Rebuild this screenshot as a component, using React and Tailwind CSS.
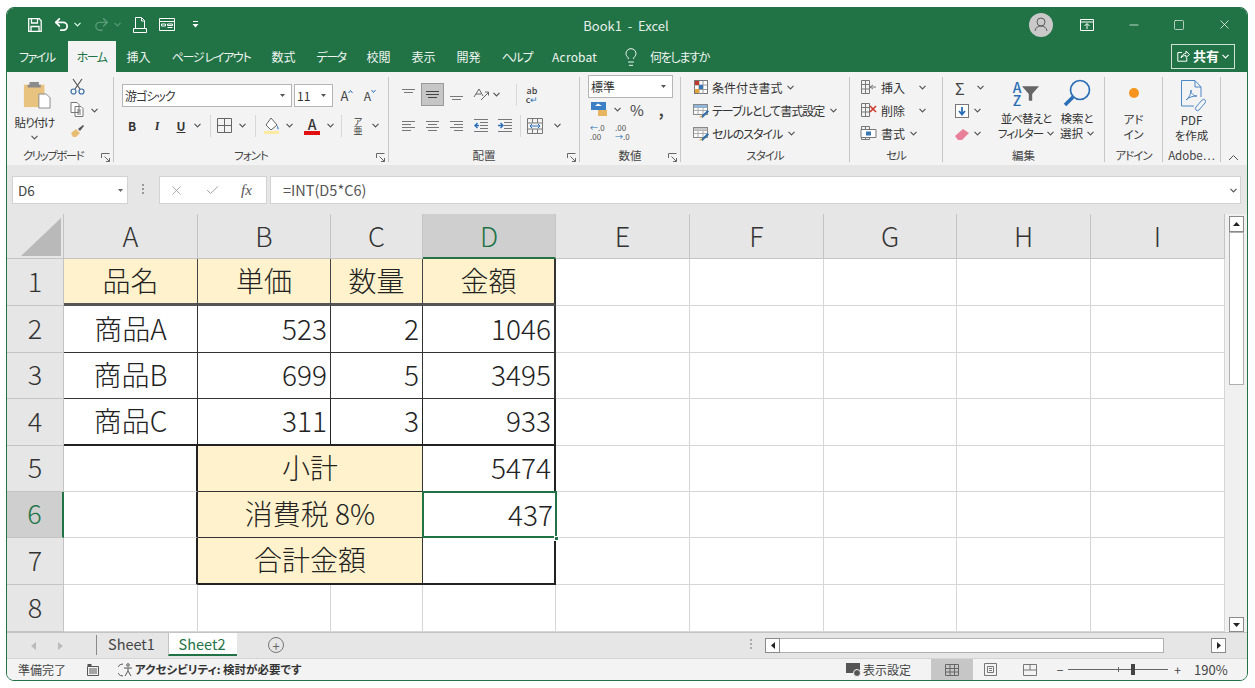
import { Lightbulb, Minus, Square, X, Undo2, Redo2, Check } from "lucide-react";

const Chev = ({ className = "", color = "#555" }) => (
  <svg width="7" height="5" viewBox="0 0 7 5" className={`shrink-0 ${className}`} fill="none" stroke={color} strokeWidth="1.2">
    <path d="M0.5 0.8 3.5 3.8 6.5 0.8" />
  </svg>
);

const Slot = ({ className = "", children }) => (
  <div className={`flex shrink-0 items-center justify-center ${className}`}>{children}</div>
);

const VSep = ({ className = "" }) => <div className={`h-[22px] w-px shrink-0 bg-[#d8d8d8] ${className}`} />;

const Kana = ({ children }) => <span className="tracking-[-1px] whitespace-nowrap">{children}</span>;

// ribbon group with the label on the bottom line
const Group = ({ className = "", label, launcher, children }) => (
  <div className={`relative flex h-[85px] shrink-0 flex-col border-r border-[#c6c6c6] ${className}`}>
    <div className="h-[72px]">{children}</div>
    <div className="h-[13px] text-center text-[11.5px] leading-[13px] text-[#444]">{label}</div>
    {launcher && (
      <svg width="9" height="9" viewBox="0 0 9 9" className="absolute right-[3px] bottom-0" fill="none" stroke="#666">
        <path d="M.5 5V.5H8.5M8.5 8.5 3.5 3.500M8.5 5V8.5H5" />
      </svg>
    )}
  </div>
);

const Combo = ({ className = "", children }) => (
  <div className={`flex h-[23px] shrink-0 items-center justify-between border border-[#b5b5b5] bg-white pr-[6px] pl-[2px] text-[12px] text-[#333] ${className}`}>
    <span>{children}</span>
    <svg width="5" height="3" viewBox="0 0 5 3"><path d="M0 0h5L2.500 3z" fill="#555" /></svg>
  </div>
);

const Lines = ({ rows, color = "#777", selected = false }) => (
  <svg width="15" height="13" viewBox="0 0 15 13" stroke={selected ? "#444" : color} strokeWidth="1">
    {rows.map((r, i) => (
      <path key={i} d={`M${r[0]} ${r[2]}.5H${r[1]}`} />
    ))}
  </svg>
);

const Indent = ({ flip }) => (
  <svg width="16" height="14" viewBox="0 0 16 14" fill="none">
    <path d="M1 .5h14M7 3.500h8M7 6.500h8M7 9.500h8M1 12.500h14" stroke="#777" />
    <path d={flip ? "M1 6.500h4M3.500 4 6 6.500 3.500 9" : "M6 6.500H2M4.500 4 2 6.500 4.500 9"} stroke="#2a6fb5" strokeWidth="1.4" />
  </svg>
);

const Tab = ({ children, className = "" }) => <div className={`shrink-0 text-[12px] whitespace-nowrap ${className}`}>{children}</div>;

const StyleIcon = ({ kind }) => (
  <svg width="17" height="15" viewBox="0 0 17 15" fill="none" className="shrink-0">
    {kind === "cond" ? (
      <>
        <rect x="1.500" y=".5" width="13" height="13" fill="#fff" stroke="#777" />
        <path d="M6 1v13M10 1v13M1 5h13M1 9.500h13" stroke="#999" />
        <rect x="2" y="1" width="4" height="4" fill="#c0392b" />
        <rect x="6" y="5" width="4" height="4" fill="#3a78b5" />
        <rect x="2" y="9" width="4" height="4" fill="#e2a33a" />
      </>
    ) : (
      <>
        <rect x=".5" y="1.500" width="14" height="10" fill="#fff" stroke="#888" />
        <path d="M1 4.500h13M1 7.500h13M5 2v9M10 2v9" stroke="#aaa" />
        <rect x="1" y="2" width="13" height="2.500" fill={kind === "table" ? "#8fb7dd" : "#c9c9c9"} />
        <path d="M8 13.500 14.500 7l1.500 1.500-6.500 6.500z" fill="#2f6ea8" />
        <path d="M6 14.500 8 12.500l1.500 1.500z" fill="#e0a030" />
      </>
    )}
  </svg>
);

const CellIcon = ({ kind }) => (
  <svg width="17" height="15" viewBox="0 0 17 15" fill="none" className="shrink-0">
    <path d="M1.500 .5h8v13h-8zM1.500 4.500h8M1.500 9h8M5.500 1v12" stroke="#777" />
    {kind === "insert" && <path d="M10 7h6M13 5l-3 2 3 2" stroke="#777" />}
    {kind === "delete" && <path d="M10 3l6 6M16 3l-6 6" stroke="#cf3a2c" strokeWidth="1.6" />}
    {kind === "format" && <path d="M1 3.500h15v8H1z" fill="#fff" stroke="#777" />}
    {kind === "format" && <path d="M6 5.500h5v4H6z" fill="#3a78b5" />}
  </svg>
);

// plain worksheet cells
const grid = "border-r border-b border-[#d6d6d6]";
const cell = "flex items-center pb-[3px] text-[28px] leading-none font-light text-[#222]";
const cream = "bg-[#fff2cc] justify-center";
const num = "justify-end pr-[3px]";
const rowHead = "flex items-center justify-center border-r border-b border-[#c4c4c4] bg-[#e6e6e6] pb-[4px] text-[27px] leading-none font-light text-[#333]";
const colHead = "flex items-center justify-center border-r border-b border-[#c4c4c4] bg-[#e6e6e6] pb-[1px] text-[27px] leading-none font-light text-[#333]";
const emptyCols = [0, 1, 2, 3, 4];

const Blanks = () => emptyCols.map((c) => <div key={c} className={grid} />);

export default function App() {
  return (
    <div className="h-screen overflow-hidden bg-white pt-[7px] pl-[6px] font-['Noto_Sans_CJK_JP','Noto_Sans',sans-serif]">
      <div className="flex h-[674px] w-[1242px] flex-col overflow-hidden rounded-[8px] border border-[#217346] bg-[#e6e6e6]">
        {/* title bar */}
        <div className="flex h-[33px] shrink-0 items-center bg-[#217346] pl-[21px] text-white">
          <svg width="14" height="14" viewBox="0 0 14 14" fill="none" stroke="#fff" strokeWidth="1.300">
            <path d="M.7.7h10.500l2 2v10.600H.7zM3.500 1v4h6V1M3 13V8.500h8V13" />
          </svg>
          <Undo2 size={17} strokeWidth={2.500} className="ml-[11px]" />
          <Chev className="ml-[4px]" color="#dfe" />
          <Redo2 size={17} strokeWidth={2} color="#5a9a78" className="ml-[12px]" />
          <Chev className="ml-[4px]" color="#5a9a78" />
          <svg width="14" height="16" viewBox="0 0 14 16" fill="none" stroke="#fff" className="ml-[12px]">
            <path d="M2.500 11V.5h6l3 3V11M8.500 1v3h3M.5 11.500h13v4H.5z" />
          </svg>
          <svg width="16" height="13" viewBox="0 0 16 13" fill="none" stroke="#fff" className="ml-[12px]">
            <path d="M.5.5h15v12H.5zM1 3.500h14M2.500 6h4v2h-4zM8.500 6h5v1.500h-5zM8.500 9.500h5" />
          </svg>
          <svg width="7" height="7" viewBox="0 0 7 7" fill="#fff" className="ml-[17px]">
            <path d="M1 0h5v1H1zM.5 3h6L3.500 6.500z" />
          </svg>
          <div className="ml-[377px] w-[100px] pt-[3px] text-center text-[13px] whitespace-nowrap text-[#e6efe9]">Book1&nbsp;&nbsp;-&nbsp;&nbsp;Excel</div>
          <div className="ml-[353px] flex h-[24px] w-[24px] items-center justify-center rounded-full bg-[#c9c9c9]">
            <svg width="14" height="15" viewBox="0 0 14 15" fill="none" stroke="#5c5c5c" strokeWidth="1">
              <circle cx="7" cy="5" r="4" />
              <path d="M1 14c.5-3.500 3-5 6-5s5.500 1.500 6 5" />
            </svg>
          </div>
          <svg width="14" height="12" viewBox="0 0 14 12" fill="none" stroke="#fff" className="ml-[27px]">
            <path d="M.5.5h13v11H.5zM1 3h12M7 10V5M4.500 7 7 4.500 9.500 7" />
          </svg>
          <Minus size={14} strokeWidth={1.200} className="ml-[33px]" />
          <Square size={12} strokeWidth={1.300} className="ml-[32px]" />
          <X size={15} strokeWidth={1.200} className="ml-[32px]" />
        </div>

        {/* tabs */}
        <div className="flex h-[31px] shrink-0 items-center bg-[#217346] pl-[12px] text-[#f0f5f2] [font-feature-settings:'palt']">
          <Tab className="tracking-[-1.5px]">ファイル</Tab>
          <Tab className="ml-[13px] flex h-full w-[48px] items-center justify-center bg-[#f3f3f3] tracking-[-1.5px] text-[#217346]">ホーム</Tab>
          <Tab className="ml-[11px]">挿入</Tab>
          <Tab className="ml-[21px] tracking-[-1.3px]">ページ レイアウト</Tab>
          <Tab className="ml-[21px]">数式</Tab>
          <Tab className="ml-[21px] tracking-[-1.5px]">データ</Tab>
          <Tab className="ml-[21px]">校閲</Tab>
          <Tab className="ml-[21px]">表示</Tab>
          <Tab className="ml-[21px]">開発</Tab>
          <Tab className="ml-[21px] tracking-[-1.3px]">ヘルプ</Tab>
          <Tab className="ml-[20px] tracking-[0.2px]">Acrobat</Tab>
          <Lightbulb size={20} strokeWidth={1.200} className="ml-[24px]" />
          <Tab className="ml-[9px] tracking-[-1.3px]">何をしますか</Tab>
          <div className="mt-[-1px] mr-[12px] ml-auto flex h-[25px] w-[64px] shrink-0 items-center justify-center gap-[3px] border border-[#cfe0d6]">
            <svg width="13" height="12" viewBox="0 0 13 12" fill="none" stroke="#fff">
              <path d="M5 2.500H.8v8.700h9V8M4 8c.5-3 3-4.500 5-4.500V1l3.500 3.500L9 7.500V5.500C7 5.500 5 6 4 8z" />
            </svg>
            <span className="text-[13px] font-bold whitespace-nowrap text-white">共有</span>
            <Chev color="#fff" />
          </div>
        </div>

        {/* ribbon */}
        <div className="flex h-[93px] shrink-0 items-start bg-[#f3f3f3] pt-[5px] text-[#444] [font-feature-settings:'palt']">
          <Group className="w-[107px]" label={<span className="mr-[14px] tracking-[-1.5px]">クリップボード</span>} launcher>
            <div className="flex">
              <div className="flex w-[55px] flex-col items-center">
                <svg width="28" height="31" viewBox="0 0 30 31" className="mt-[2px] ml-[4px]">
                  <rect x="1" y="5" width="22" height="24" fill="#e8c27f" />
                  <path d="M7 5V2h10v3h2v3H5V5z" fill="#8a8a8a" />
                  <path d="M17 15h8l4 4v11H17z" fill="#fff" stroke="#888" />
                </svg>
                <div className="mt-[5px] text-[11.500px] leading-[14px] tracking-[-1px] whitespace-nowrap text-[#333]">貼り付け</div>
                <Chev className="mt-[6px]" />
              </div>
              <div className="flex w-[30px] flex-col items-center pt-[1px]">
                <svg width="15" height="17" viewBox="0 0 15 17" fill="none" stroke="#555" strokeWidth="1.200">
                  <path d="M3 1l7 10M12 1 5 11" />
                  <circle cx="3.500" cy="13.500" r="2.500" stroke="#3b6ea5" />
                  <circle cx="11.500" cy="13.500" r="2.500" stroke="#3b6ea5" />
                </svg>
                <svg width="14" height="15" viewBox="0 0 14 15" fill="#fff" stroke="#777" className="mt-[7px]">
                  <path d="M1 .5h6l2 2v8H1zM5 4.500h6l2 2v8H5z" />
                  <path d="M7 8h4M7 10h4M7 12h4" />
                </svg>
                <svg width="15" height="14" viewBox="0 0 15 14" className="mt-[7px]">
                  <path d="M1 9 6 5l4 4-4 4H3z" fill="#e7bd73" />
                  <path d="M8 5l5-4 1 1-4 5z" fill="#555" />
                </svg>
              </div>
              <Chev className="mt-[31px] ml-[-1px]" />
            </div>
          </Group>

          <Group className="w-[275px]" label={<Kana>フォント</Kana>} launcher>
            <div className="mt-[7px] flex items-center">
              <Combo className="ml-[8px] w-[170px]"><Kana>游ゴシック</Kana></Combo>
              <Combo className="ml-[2px] w-[39px]">11</Combo>
              <Slot className="ml-[6px] w-[16px]">
                <span className="text-[13px] leading-[14px] text-[#444]">A</span>
                <svg width="5" height="3" viewBox="0 0 5 3" className="mb-[8px]" fill="none" stroke="#2a6fb5"><path d="M.5 3 2.500.5 4.500 3" /></svg>
              </Slot>
              <Slot className="ml-[7px] w-[16px]">
                <span className="text-[12px] leading-[14px] text-[#444]">A</span>
                <svg width="5" height="3" viewBox="0 0 5 3" className="mb-[8px]" fill="none" stroke="#2a6fb5"><path d="M.5 0 2.500 2.500 4.500 0" /></svg>
              </Slot>
            </div>
            <div className="mt-[7px] flex h-[23px] items-center pl-[8px] text-[12px] text-[#333]">
              <Slot className="w-[20px] font-bold">B</Slot>
              <Slot className="ml-[5px] w-[20px] font-serif font-bold italic">I</Slot>
              <Slot className="ml-[4px] w-[20px] font-bold underline">U</Slot>
              <Chev className="ml-[3px]" />
              <VSep className="ml-[9px]" />
              <svg width="15" height="15" viewBox="0 0 15 15" fill="none" stroke="#666" className="ml-[6px]">
                <path d="M.5.5h14v14H.5zM7.500 1v13M1 7.500h13" />
              </svg>
              <Chev className="ml-[7px]" />
              <VSep className="ml-[9px]" />
              <svg width="16" height="17" viewBox="0 0 16 17" fill="none" className="ml-[8px]">
                <path d="M7 1 13 8 7 13 2 8z" stroke="#666" fill="#fff" />
                <path d="M13 8c1 2 2 3 1.500 4S13 12.500 13 8z" fill="#3b7fc4" />
                <rect y="14" width="15" height="3" fill="#fbeaa0" />
              </svg>
              <Chev className="ml-[6px]" />
              <div className="ml-[11px] flex w-[16px] shrink-0 flex-col items-center">
                <span className="h-[14px] text-[14px] leading-[14px] font-medium text-[#333]">A</span>
                <div className="h-[4px] w-[16px] bg-[#e01010]" />
              </div>
              <Chev className="ml-[7px]" />
              <VSep className="ml-[7px]" />
              <Slot className="ml-[7px] w-[18px] flex-col text-[9px] leading-[9px]">
                <span>ア</span>
                <span>亜</span>
              </Slot>
              <Chev className="ml-[5px]" />
            </div>
          </Group>

          <Group className="w-[191px]" label="配置" launcher>
            <div className="mt-[6px] flex h-[23px] items-center pl-[12px]">
              <Lines rows={[[1, 14, 1], [3, 12, 4]]} />
              <Slot className="ml-[5px] h-[23px] w-[23px] border border-[#9a9a9a] bg-[#c6c6c6]"><Lines rows={[[1, 14, 3], [1, 14, 6], [3, 12, 9]]} selected /></Slot>
              <Slot className="ml-[5px]"><Lines rows={[[1, 14, 8], [3, 12, 11]]} /></Slot>
              <svg width="17" height="15" viewBox="0 0 17 15" fill="none" stroke="#666" className="ml-[9px]">
                <path d="M1 10 6 2l4 7M3 7h5M8 13 15 6M12 5h3.500v3.500" />
              </svg>
              <Chev className="ml-[3px]" />
              <VSep className="ml-[16px]" />
              <Slot className="ml-[8px] w-[14px] flex-col text-[9px] leading-[9px] font-medium text-[#444]"><span>ab</span><span>c<span className="text-[#2a6fb5]">↵</span></span></Slot>
            </div>
            <div className="mt-[8px] flex h-[23px] items-center pl-[12px]">
              <Lines rows={[[1, 14, 2], [1, 10, 5], [1, 14, 8], [1, 10, 11]]} />
              <Slot className="ml-[9px]"><Lines rows={[[1, 14, 2], [3, 12, 5], [1, 14, 8], [3, 12, 11]]} /></Slot>
              <Slot className="ml-[9px]"><Lines rows={[[1, 14, 2], [5, 14, 5], [1, 14, 8], [5, 14, 11]]} /></Slot>
              <Slot className="ml-[9px]"><Indent /></Slot>
              <Slot className="ml-[8px]"><Indent flip /></Slot>
              <VSep className="ml-[7px]" />
              <svg width="16" height="16" viewBox="0 0 16 16" fill="none" stroke="#777" className="ml-[6px]">
                <path d="M.5.5h15v15H.5zM1 5h14M1 11h14M5.500 1v4M10.500 1v4M5.500 11v4M10.500 11v4" />
                <path d="M3 8h10M5 6 3 8l2 2M11 6l2 2-2 2" stroke="#2a6fb5" />
              </svg>
              <Chev className="ml-[11px]" />
            </div>
          </Group>

          <Group className="w-[101px]" label="数値" launcher>
            <Combo className="mt-[-2px] ml-[8px] w-[85px]">標準</Combo>
            <div className="flex h-[22px] items-center pl-[11px]">
              <svg width="17" height="16" viewBox="0 0 17 16" className="shrink-0">
                <rect x="0" y="1" width="15" height="8" fill="#3b7fc4" />
                <path d="M7 2.500l-3 2.500h7z" fill="#fff" />
                <rect x="7" y="9" width="9" height="6" fill="#e7b45f" />
              </svg>
              <Chev className="ml-[6px]" />
              <span className="ml-[9px] text-[15px] leading-none text-[#444]">%</span>
              <span className="ml-[15px] text-[15px] leading-none font-bold text-[#444]">,</span>
            </div>
            <div className="flex h-[23px] items-center pl-[10px] text-[8px] leading-[9px] text-[#555]">
              <span className="w-[16px]"><span className="text-[#2a6fb5]">←</span>.0<br />.00</span>
              <span className="ml-[9px] w-[16px]">.00<br /><span className="text-[#2a6fb5]">→</span>.0</span>
            </div>
          </Group>

          <Group className="w-[169px]" label={<Kana>スタイル</Kana>}>
            <div className="mt-[-1px] flex flex-col pl-[12px] text-[12px] text-[#333]">
              <div className="flex h-[23px] items-center gap-[2px]"><StyleIcon kind="cond" />条件付き書式<Chev className="ml-[2px]" /></div>
              <div className="flex h-[23px] items-center gap-[2px]"><StyleIcon kind="table" /><Kana>テーブルとして書式設定</Kana><Chev className="ml-[4px]" /></div>
              <div className="flex h-[23px] items-center gap-[2px]"><StyleIcon kind="cell" /><Kana>セルのスタイル</Kana><Chev className="ml-[4px]" /></div>
            </div>
          </Group>

          <Group className="w-[93px]" label={<Kana>セル</Kana>}>
            <div className="mt-[-1px] flex flex-col pl-[10px] text-[12px] text-[#333]">
              <div className="flex h-[23px] items-center gap-[4px]"><CellIcon kind="insert" />挿入<Chev className="ml-[10px]" /></div>
              <div className="flex h-[23px] items-center gap-[4px]"><CellIcon kind="delete" />削除<Chev className="ml-[10px]" /></div>
              <div className="flex h-[23px] items-center gap-[4px]"><CellIcon kind="format" />書式<Chev className="ml-[1px]" /></div>
            </div>
          </Group>

          <Group className="w-[162px]" label="編集">
            <div className="flex">
              <div className="mt-[-1px] flex w-[50px] flex-col pl-[12px]">
                <div className="flex h-[23px] items-center"><span className="w-[15px] text-[16px] leading-none text-[#444]">Σ</span><Chev className="ml-[7px]" /></div>
                <div className="flex h-[23px] items-center">
                  <svg width="14" height="14" viewBox="0 0 14 14" className="shrink-0"><rect x=".5" y=".5" width="13" height="13" fill="#fff" stroke="#777" /><path d="M7 3v7M4 7l3 3.500L10 7" fill="none" stroke="#2a6fb5" strokeWidth="1.800" /></svg>
                  <Chev className="ml-[5px]" />
                </div>
                <div className="flex h-[23px] items-center">
                  <svg width="15" height="12" viewBox="0 0 15 12" className="shrink-0"><path d="M0 8 8 1l6 4-7 7H3z" fill="#e8809a" /></svg>
                  <Chev className="ml-[4px]" />
                </div>
              </div>
              <div className="flex w-[66px] flex-col items-center pt-[4px]">
                <div className="flex h-[25px] items-center">
                  <span className="flex flex-col text-[14px] leading-[13px] font-medium text-[#2a6fb5]"><span>A</span><span>Z</span></span>
                  <svg width="17" height="15" viewBox="0 0 15 13" className="ml-[1px]"><path d="M0 0h15L9 7v6H6V7z" fill="#666" /></svg>
                </div>
                <div className="mt-[5px] text-[11.500px] leading-[15px] tracking-[-1px] whitespace-nowrap text-[#333]">並べ替えと</div>
                <div className="flex items-center text-[11.500px] leading-[15px] tracking-[-1px] whitespace-nowrap text-[#333]">フィルター<Chev className="ml-[4px]" /></div>
              </div>
              <div className="flex w-[36px] flex-col items-center pt-[2px]">
                <svg width="28" height="28" viewBox="0 0 28 28" fill="none">
                  <circle cx="17" cy="11" r="9.500" stroke="#2a6fb5" strokeWidth="1.700" />
                  <path d="M10 18 2 26" stroke="#2a6fb5" strokeWidth="3.500" />
                </svg>
                <div className="mt-[4px] text-[11.500px] leading-[15px] text-[#333]">検索と</div>
                <div className="flex items-center text-[11.500px] leading-[15px] text-[#333]">選択<Chev className="ml-[4px]" /></div>
              </div>
            </div>
          </Group>

          <Group className="w-[58px]" label={<Kana>アドイン</Kana>}>
            <div className="flex flex-col items-center text-[11.500px] leading-[15px] text-[#333]">
              <div className="mt-[11px] h-[10px] w-[10px] rounded-full bg-[#f7941d]" />
              <div className="mt-[14px]">アド</div>
              <div>イン</div>
            </div>
          </Group>

          <Group className="w-[58px]" label="Adobe…">
            <div className="flex flex-col items-center text-[11.500px] leading-[15px] text-[#333]">
              <svg width="26" height="33" viewBox="0 0 26 33" fill="none" stroke="#4b87c7" className="mt-[3px] ml-[3px]">
                <path d="M14 26H1.500V.5H15L21 7v10M15 1v6h6" />
                <path d="M6 20c3-2 5-6 5-10 0 4 3 6 6 6-4 0-8 1-11 4z" />
                <path d="M16 27l6-7a2 2 0 0 1 3 3l-6 7a2 2 0 0 1-3-3z" />
              </svg>
              <div>PDF</div>
              <div>を作成</div>
            </div>
          </Group>

          <svg width="11" height="7" viewBox="0 0 11 7" fill="none" stroke="#555" className="mt-[77px] ml-[7px]">
            <path d="M1 6 5.500 1.500 10 6" />
          </svg>
        </div>

        {/* formula bar */}
        <div className="flex h-[49px] shrink-0 items-start bg-[#e6e6e6] pt-[11px] pl-[5px]">
          <div className="flex h-[28px] w-[116px] items-center justify-between border border-[#d2d2d2] bg-white pr-[4px] pl-[5px] text-[13.500px] text-[#444]">
            D6
            <svg width="5" height="3" viewBox="0 0 5 3"><path d="M0 0h5L2.500 3z" fill="#666" /></svg>
          </div>
          <div className="mx-[14px] mt-[8px] flex w-[3px] flex-col gap-[2px]">
            <div className="h-[2px] w-[2px] bg-[#999]" />
            <div className="h-[2px] w-[2px] bg-[#999]" />
            <div className="h-[2px] w-[2px] bg-[#999]" />
          </div>
          <div className="flex h-[28px] w-[108px] items-center border border-[#d2d2d2] bg-white pl-[9px]">
            <X size={15} strokeWidth={1.300} color="#999" />
            <Check size={15} strokeWidth={1.500} color="#999" className="ml-[21px]" />
            <span className="ml-[21px] font-['Liberation_Serif',serif] text-[15px] text-[#555] italic">fx</span>
          </div>
          <div className="ml-[3px] flex h-[28px] w-[971px] items-center justify-between border border-[#d2d2d2] bg-white pr-[3px] pl-[12px] text-[14.500px] text-[#555]">
            =INT(D5*C6)
            <Chev />
          </div>
        </div>

        {/* worksheet */}
        <div className="flex h-[418px] shrink-0 overflow-hidden">
          <div className="grid w-[1218px] shrink-0 grid-cols-[57px_134px_133px_92px_133px_134px_134px_133px_134px_134px] grid-rows-[45px_47px_47px_46px_47px_46px_46px_47px_47px] bg-white">
            <div className="flex items-end justify-end border-r border-b border-[#c4c4c4] bg-[#e6e6e6] pr-[2px] pb-[2px]">
              <svg width="40" height="38" viewBox="0 0 40 38"><path d="M40 0v38H0z" fill="#b9b9b9" /></svg>
            </div>
            <div className={colHead}>A</div>
            <div className={colHead}>B</div>
            <div className={colHead}>C</div>
            <div className="flex items-center justify-center border-r border-b-2 border-[#c4c4c4] border-b-[#217346] bg-[#cfcfcf] pb-[1px] text-[27px] leading-none font-light text-[#217346]">D</div>
            <div className={colHead}>E</div>
            <div className={colHead}>F</div>
            <div className={colHead}>G</div>
            <div className={colHead}>H</div>
            <div className={colHead}>I</div>

            <div className={rowHead}>1</div>
            <div className={`${cell} ${cream} border-r border-b-[3px] border-r-[#444] border-b-[#555]`}>品名</div>
            <div className={`${cell} ${cream} border-r border-b-[3px] border-r-[#444] border-b-[#555]`}>単価</div>
            <div className={`${cell} ${cream} border-r border-b-[3px] border-r-[#444] border-b-[#555]`}>数量</div>
            <div className={`${cell} ${cream} border-r-2 border-b-[3px] border-r-[#333] border-b-[#555]`}>金額</div>
            <Blanks />

            <div className={rowHead}>2</div>
            <div className={`${cell} justify-center border-r border-b border-[#333]`}>商品A</div>
            <div className={`${cell} ${num} border-r border-b border-[#333]`}>523</div>
            <div className={`${cell} ${num} border-r border-b border-[#333]`}>2</div>
            <div className={`${cell} ${num} border-r-2 border-b border-[#333]`}>1046</div>
            <Blanks />

            <div className={rowHead}>3</div>
            <div className={`${cell} justify-center border-r border-b border-[#333]`}>商品B</div>
            <div className={`${cell} ${num} border-r border-b border-[#333]`}>699</div>
            <div className={`${cell} ${num} border-r border-b border-[#333]`}>5</div>
            <div className={`${cell} ${num} border-r-2 border-b border-[#333]`}>3495</div>
            <Blanks />

            <div className={rowHead}>4</div>
            <div className={`${cell} justify-center border-r border-b-2 border-[#222]`}>商品C</div>
            <div className={`${cell} ${num} border-r border-b-2 border-[#222]`}>311</div>
            <div className={`${cell} ${num} border-r border-b-2 border-[#222]`}>3</div>
            <div className={`${cell} ${num} border-r-2 border-b-2 border-[#222]`}>933</div>
            <Blanks />

            <div className={rowHead}>5</div>
            <div className={`${grid} border-r-2 border-r-[#222]`} />
            <div className={`${cell} ${cream} col-span-2 border-r border-b border-[#333]`}>小計</div>
            <div className={`${cell} ${num} border-r-2 border-b border-r-[#222] border-b-[#217346]`}>5474</div>
            <Blanks />

            <div className="flex items-center justify-center border-r-2 border-b border-r-[#217346] border-b-[#c4c4c4] bg-[#cfcfcf] pb-[4px] text-[27px] leading-none font-light text-[#217346]">6</div>
            <div className={`${grid} border-r-2 border-r-[#222]`} />
            <div className={`${cell} ${cream} col-span-2 border-r border-b border-[#333]`}>消費税 8%</div>
            <div className={`${cell} ${num} relative`}>
              437
              <div className="absolute top-[-1px] right-[-1px] bottom-0 left-[-1px] border-2 border-[#217346]" />
              <div className="absolute right-[-3px] bottom-[-3px] h-[5px] w-[5px] border border-white bg-[#217346]" />
            </div>
            <Blanks />

            <div className={rowHead}>7</div>
            <div className={`${grid} border-r-2 border-r-[#222]`} />
            <div className={`${cell} ${cream} col-span-2 border-r border-b-2 border-r-[#333] border-b-[#222]`}>合計金額</div>
            <div className="border-r-2 border-b-2 border-[#222]" />
            <Blanks />

            <div className={rowHead}>8</div>
            <div className={grid} />
            <div className={grid} />
            <div className={grid} />
            <div className={grid} />
            <Blanks />
          </div>

          {/* vertical scrollbar */}
          <div className="flex w-[22px] shrink-0 flex-col items-center bg-[#f0f0f0] pt-[2px] pl-[1px]">
            <div className="flex h-[16px] w-[15px] items-center justify-center border border-[#8a8a8a] bg-white">
              <svg width="7" height="4" viewBox="0 0 7 4"><path d="M0 4 3.500 0 7 4z" fill="#222" /></svg>
            </div>
            <div className="h-[153px] w-[15px] border border-[#b0b0b0] bg-white" />
            <div className="mt-[232px] flex h-[15px] w-[15px] items-center justify-center border border-[#8a8a8a] bg-white">
              <svg width="7" height="4" viewBox="0 0 7 4"><path d="M0 0h7L3.500 4z" fill="#222" /></svg>
            </div>
          </div>
        </div>

        {/* sheet tabs */}
        <div className="flex h-[26px] shrink-0 items-start border-t border-[#c4c4c4] bg-[#e6e6e6] text-[14.500px] text-[#444]">
          <svg width="5" height="8" viewBox="0 0 5 8" fill="#bbb" className="mt-[9px] ml-[24px]"><path d="M5 0v8L0 4z" /></svg>
          <svg width="5" height="8" viewBox="0 0 5 8" fill="#bbb" className="mt-[9px] ml-[22px]"><path d="M0 0v8l5-4z" /></svg>
          <div className="mt-[2px] ml-[33px] h-[20px] w-px bg-[#8a8a8a]" />
          <div className="ml-[11px] h-[23px] w-[60px] leading-[22px]">Sheet1</div>
          <div className="h-[23px] w-[69px] border-b-2 border-l border-[#217346] border-l-[#c4c4c4] bg-white pr-[2px] text-center leading-[22px] text-[#217346]">Sheet2</div>
          <div className="mt-[4px] ml-[31px] flex h-[16px] w-[16px] items-center justify-center rounded-full border border-[#777] text-[13px] leading-none text-[#666]">+</div>
          <div className="mt-[6px] ml-[466px] flex w-[2px] flex-col gap-[2px]">
            <div className="h-[2px] w-[2px] bg-[#aaa]" />
            <div className="h-[2px] w-[2px] bg-[#aaa]" />
            <div className="h-[2px] w-[2px] bg-[#aaa]" />
          </div>
          <div className="mt-[5px] ml-[13px] flex h-[15px] w-[15px] items-center justify-center border border-[#8a8a8a] bg-white">
            <svg width="4" height="7" viewBox="0 0 4 7"><path d="M4 0v7L0 3.500z" fill="#222" /></svg>
          </div>
          <div className="mt-[5px] h-[15px] w-[384px] border border-l-0 border-[#b0b0b0] bg-white" />
          <div className="mt-[5px] ml-[47px] flex h-[15px] w-[15px] items-center justify-center border border-[#8a8a8a] bg-white">
            <svg width="4" height="7" viewBox="0 0 4 7"><path d="M0 0v7l4-3.500z" fill="#222" /></svg>
          </div>
        </div>

        {/* status bar */}
        <div className="flex h-[22px] shrink-0 items-center border-t border-[#d4d4d4] bg-[#f3f3f3] text-[12px] text-[#444] [font-feature-settings:'palt']">
          <span className="ml-[11px] w-[48px] shrink-0 whitespace-nowrap">準備完了</span>
          <svg width="12" height="12" viewBox="0 0 12 12" className="ml-[21px] shrink-0" fill="none" stroke="#555">
            <path d="M.5 2.500h11v9H.5zM2 5h8M2 7h8M2 9h8" />
            <path d="M1 0h3v2H1z" fill="#555" />
          </svg>
          <svg width="15" height="14" viewBox="0 0 15 14" fill="none" stroke="#555" className="ml-[19px] shrink-0">
            <path d="M5 1a6 6 0 0 0 0 12" />
            <circle cx="10" cy="2" r="1.300" />
            <path d="M6 5h8M10 5v3M7 13l3-5 3 5" />
          </svg>
          <span className="ml-[2px] w-[162px] shrink-0 text-[11.500px] font-bold whitespace-nowrap text-[#333]">アクセシビリティ: 検討が必要です</span>
          <svg width="16" height="14" viewBox="0 0 16 14" className="ml-[549px] shrink-0">
            <rect width="14" height="10" fill="#555" />
            <circle cx="11" cy="10" r="3.500" fill="#555" stroke="#f3f3f3" />
          </svg>
          <span className="ml-[1px] w-[48px] shrink-0 whitespace-nowrap">表示設定</span>
          <div className="ml-[20px] flex h-full w-[42px] shrink-0 items-center justify-center bg-[#c6c6c6]">
            <svg width="14" height="12" viewBox="0 0 14 12" fill="none" stroke="#666"><path d="M.5.500h13v11H.5zM1 4.500h12M1 8h12M5 1v10M9.500 1v10" /></svg>
          </div>
          <svg width="13" height="13" viewBox="0 0 13 13" fill="none" stroke="#777" className="ml-[11px] shrink-0"><path d="M.5.500h12v12H.5zM3.500 3.500h6v6h-6zM5 5.500h3M5 7.500h3" /></svg>
          <svg width="14" height="12" viewBox="0 0 14 12" fill="none" stroke="#777" className="ml-[26px] shrink-0"><path d="M.5.500h13v11H.5zM.5 6h13M7 1v5" /></svg>
          <span className="ml-[19px] w-[8px] text-center leading-none">−</span>
          <div className="relative ml-[4px] flex h-[12px] w-[100px] shrink-0 items-center">
            <div className="h-px w-full bg-[#666]" />
            <div className="absolute left-[50px] h-[5px] w-px bg-[#666]" />
            <div className="absolute left-[63px] h-[11px] w-[4px] bg-[#444]" />
          </div>
          <span className="ml-[5px] w-[9px] text-center leading-none">+</span>
          <span className="ml-[12px] text-[13px] whitespace-nowrap">190%</span>
        </div>
      </div>
    </div>
  );
}
